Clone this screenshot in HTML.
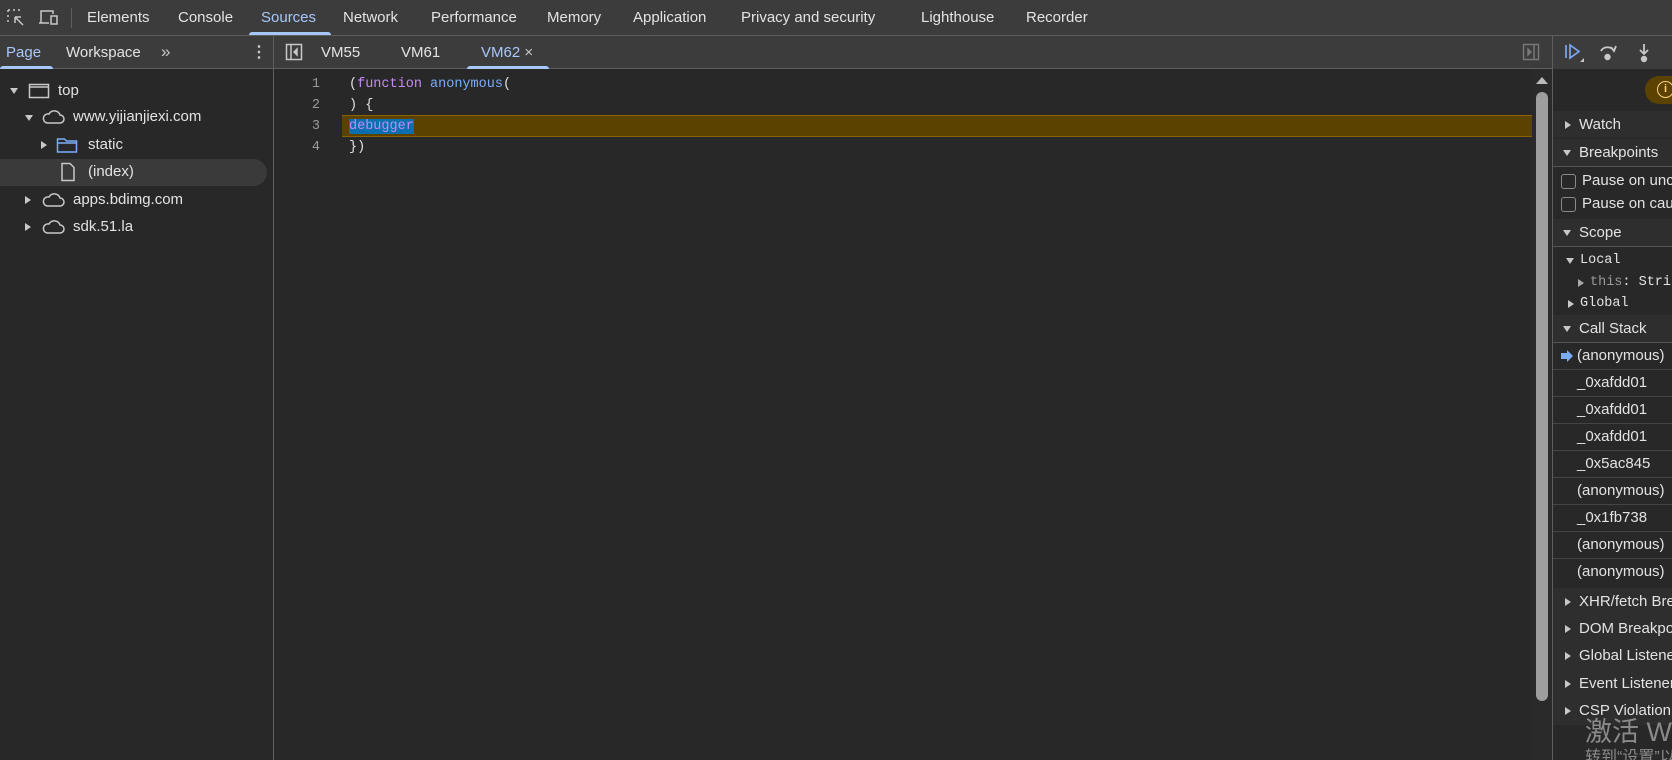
<!DOCTYPE html>
<html><head><meta charset="utf-8"><style>
*{margin:0;padding:0;box-sizing:border-box}
html{overflow:hidden;width:1672px;height:760px}
body{width:1672px;height:760px;overflow:hidden;background:#282828;font-family:"Segoe UI","Liberation Sans","Noto Sans CJK SC",sans-serif;font-size:15px;line-height:22px;color:#e3e3e3;position:relative}
.a{position:absolute;white-space:nowrap}
.bar{background:#3c3c3c;position:absolute;left:0;width:1672px}
.line{position:absolute;background:#5e5e5e}
.mono{font-family:"Liberation Mono","DejaVu Sans Mono",monospace;font-size:13.5px}
.tri{display:block;width:0;height:0;border-left:4px solid transparent;border-right:4px solid transparent;border-top:6px solid #c8c8c8}
.trr{display:block;width:0;height:0;border-top:4px solid transparent;border-bottom:4px solid transparent;border-left:6px solid #c8c8c8}
.hdr{position:absolute;left:1553px;width:119px;height:27px;background:#2e2e2e}
.cs{position:absolute;left:1553px;width:119px;height:27px;border-bottom:1px solid #444}
</style></head><body>
<div class="bar" style="top:0;height:35px"></div>
<div class="line" style="top:35px;left:0;width:1672px;height:1px"></div>
<svg class="a" style="left:6px;top:8px" width="20" height="20" viewBox="0 0 20 20" fill="none" stroke="#c8c8c8" stroke-width="1.5"><path d="M2 2h2M7 2h2M12 2h2M2 2v2M2 7v2M2 12v2" stroke-dasharray="2 2"/><path d="M9 9l8 8M9 9v6M9 9h6"/></svg>
<svg class="a" style="left:38px;top:8px" width="22" height="20" viewBox="0 0 22 20" fill="none" stroke="#c8c8c8" stroke-width="1.5"><path d="M3 15V3h12v3M1 15h10"/><rect x="13" y="8" width="6" height="8"/></svg>
<div class="line" style="left:71px;top:8px;width:1px;height:20px"></div>
<div class="a" style="left:87px;top:7px">Elements</div>
<div class="a" style="left:178px;top:7px">Console</div>
<div class="a" style="left:261px;top:7px;color:#a8c7fa">Sources</div>
<div class="a" style="left:249px;top:32px;width:82px;height:3px;background:#a8c7fa;border-radius:3px 3px 0 0"></div>
<div class="a" style="left:343px;top:7px">Network</div>
<div class="a" style="left:431px;top:7px">Performance</div>
<div class="a" style="left:547px;top:7px">Memory</div>
<div class="a" style="left:633px;top:7px">Application</div>
<div class="a" style="left:741px;top:7px">Privacy and security</div>
<div class="a" style="left:921px;top:7px">Lighthouse</div>
<div class="a" style="left:1026px;top:7px">Recorder</div>
<div class="bar" style="top:36px;height:33px"></div>
<div class="line" style="top:68px;left:0;width:1672px;height:1px"></div>
<div class="a" style="left:6px;top:42px;color:#a8c7fa">Page</div>
<div class="a" style="left:0;top:66px;width:53px;height:3px;background:#a8c7fa;border-radius:3px 3px 0 0"></div>
<div class="a" style="left:66px;top:42px">Workspace</div>
<div class="a" style="left:161px;top:41px;font-size:17px;color:#c8c8c8">»</div>
<div class="a" style="left:251px;top:42px;font-size:16px;font-weight:bold;color:#c8c8c8">⋮</div>
<div class="line" style="left:273px;top:36px;width:1px;height:724px"></div>
<svg class="a" style="left:285px;top:43px" width="18" height="18" viewBox="0 0 18 18" fill="none" stroke="#c8c8c8" stroke-width="1.5"><rect x="1.5" y="1.5" width="15" height="15"/><path d="M6 2v14"/><path d="M12 6l-3 3 3 3z" fill="#c8c8c8"/></svg>
<div class="a" style="left:321px;top:42px">VM55</div>
<div class="a" style="left:401px;top:42px">VM61</div>
<div class="a" style="left:481px;top:42px;color:#a8c7fa">VM62 <span style="color:#c8c8c8">×</span></div>
<div class="a" style="left:467px;top:66px;width:82px;height:3px;background:#a8c7fa;border-radius:3px 3px 0 0"></div>
<svg class="a" style="left:1522px;top:43px" width="18" height="18" viewBox="0 0 18 18" fill="none" stroke="#777" stroke-width="1.5"><rect x="1.5" y="1.5" width="15" height="15"/><path d="M12 2v14"/><path d="M6 6l3 3-3 3z" fill="#777"/></svg>
<div class="line" style="left:1552px;top:36px;width:1px;height:724px"></div>
<div class="a" style="left:0;top:159px;width:267px;height:27px;background:#3a3a3a;border-radius:0 14px 14px 0"></div>
<div class="a" style="left:10px;top:88px"><span class="tri"></span></div>
<svg class="a" style="left:28px;top:82px" width="22" height="18"><rect x="1.5" y="2.5" width="19" height="13" fill="none" stroke="#c8c8c8" stroke-width="1.5"/><path d="M1.5 5h19" stroke="#c8c8c8" stroke-width="1.5"/></svg>
<div class="a" style="left:58px;top:80px">top</div>
<div class="a" style="left:25px;top:115px"><span class="tri"></span></div>
<svg class="a" style="left:41px;top:108px" width="24" height="18" viewBox="0 0 24 18" fill="none" stroke="#c8c8c8" stroke-width="1.5"><path d="M6 15h13a4 4 0 0 0 0-8 6 6 0 0 0-11-1 4.5 4.5 0 0 0-2 9z"/></svg>
<div class="a" style="left:73px;top:106px">www.yijianjiexi.com</div>
<div class="a" style="left:41px;top:141px"><span class="trr"></span></div>
<svg class="a" style="left:56px;top:136px" width="22" height="18" viewBox="0 0 22 18" fill="none" stroke="#7cacf8" stroke-width="1.5"><path d="M1.5 3h7l2 2h10v11h-19z"/><path d="M1.5 7h19"/></svg>
<div class="a" style="left:88px;top:134px">static</div>
<svg class="a" style="left:60px;top:162px" width="16" height="20" viewBox="0 0 16 20" fill="none" stroke="#c8c8c8" stroke-width="1.5"><path d="M2 1.5h8l4 4v13h-12z"/></svg>
<div class="a" style="left:88px;top:161px">(index)</div>
<div class="a" style="left:25px;top:196px"><span class="trr"></span></div>
<svg class="a" style="left:41px;top:191px" width="24" height="18" viewBox="0 0 24 18" fill="none" stroke="#c8c8c8" stroke-width="1.5"><path d="M6 15h13a4 4 0 0 0 0-8 6 6 0 0 0-11-1 4.5 4.5 0 0 0-2 9z"/></svg>
<div class="a" style="left:73px;top:189px">apps.bdimg.com</div>
<div class="a" style="left:25px;top:223px"><span class="trr"></span></div>
<svg class="a" style="left:41px;top:218px" width="24" height="18" viewBox="0 0 24 18" fill="none" stroke="#c8c8c8" stroke-width="1.5"><path d="M6 15h13a4 4 0 0 0 0-8 6 6 0 0 0-11-1 4.5 4.5 0 0 0-2 9z"/></svg>
<div class="a" style="left:73px;top:216px">sdk.51.la</div>
<div class="a" style="left:342px;top:115px;width:1190px;height:22px;background:#5c4200;border-top:1px solid #8a6200;border-bottom:1px solid #8a6200"></div>
<div class="a mono" style="left:306px;top:74px;width:14px;text-align:right;color:#9a9a9a;line-height:21px">1<br>2<br>3<br>4</div>
<div class="a mono" style="left:349px;top:74px;line-height:21px;color:#e3e3e3">(<span style="color:#c58af9">function</span> <span style="color:#7cacf8">anonymous</span>(<br>) {<br><span style="background:#0a6fb0;color:#c58af9">debugger</span><br>})</div>
<div class="a" style="left:1532px;top:69px;width:20px;height:691px;background:#2a2a2a"></div>
<div class="a" style="left:1536px;top:77px;width:0;height:0;border-left:6px solid transparent;border-right:6px solid transparent;border-bottom:7px solid #bbb"></div>
<div class="a" style="left:1536px;top:92px;width:12px;height:609px;background:#9e9e9e;border-radius:6px"></div>
<div class="a" style="left:1553px;top:36px;width:119px;height:33px;background:#3c3c3c"></div>
<svg class="a" style="left:1563px;top:42px" width="22" height="22" viewBox="0 0 22 22" fill="none" stroke="#7cacf8" stroke-width="1.6"><path d="M3 3v13"/><path d="M7 3l9 6.5-9 6.5z"/><path d="M17 20h4v-4z" fill="#c8c8c8" stroke="none"/></svg>
<svg class="a" style="left:1597px;top:42px" width="22" height="22" viewBox="0 0 22 22" fill="none" stroke="#c8c8c8" stroke-width="1.8"><path d="M4 9a7 6 0 0 1 13 0"/><path d="M14 5l3 4 2-5" /><circle cx="10.5" cy="15" r="2.3" fill="#c8c8c8"/></svg>
<svg class="a" style="left:1633px;top:42px" width="22" height="22" viewBox="0 0 22 22" fill="none" stroke="#c8c8c8" stroke-width="1.8"><path d="M11 2v10M7 8l4 4 4-4"/><circle cx="11" cy="17" r="2.3" fill="#c8c8c8"/></svg>
<div class="a" style="left:1645px;top:76px;width:40px;height:28px;background:#5c4200;border-radius:14px"></div>
<div class="a" style="left:1657px;top:81px;width:17px;height:17px;border:1.5px solid #ffd27a;border-radius:50%;color:#ffd27a;font-size:11px;text-align:center;line-height:14px;font-weight:bold">i</div>
<div class="hdr" style="top:111px"></div>
<div class="a" style="left:1565px;top:121px"><span class="trr"></span></div>
<div class="a" style="left:1579px;top:114px">Watch</div>
<div class="hdr" style="top:139px;border-bottom:1px solid #555;height:28px"></div>
<div class="a" style="left:1563px;top:150px"><span class="tri"></span></div>
<div class="a" style="left:1579px;top:142px">Breakpoints</div>
<div class="a" style="left:1561px;top:174px;width:15px;height:15px;border:1.5px solid #8a8a8a;border-radius:3px"></div>
<div class="a" style="left:1582px;top:170px">Pause on uncaught exceptions</div>
<div class="a" style="left:1561px;top:197px;width:15px;height:15px;border:1.5px solid #8a8a8a;border-radius:3px"></div>
<div class="a" style="left:1582px;top:193px">Pause on caught exceptions</div>
<div class="hdr" style="top:219px;border-bottom:1px solid #555;height:28px"></div>
<div class="a" style="left:1563px;top:230px"><span class="tri"></span></div>
<div class="a" style="left:1579px;top:222px">Scope</div>
<div class="a" style="left:1566px;top:258px"><span class="tri"></span></div>
<div class="a mono" style="left:1580px;top:250px">Local</div>
<div class="a" style="left:1578px;top:279px"><span class="trr" style="border-left-color:#aaa"></span></div>
<div class="a mono" style="left:1590px;top:272px"><span style="color:#9a9a9a">this</span>: String</div>
<div class="a" style="left:1568px;top:300px"><span class="trr"></span></div>
<div class="a mono" style="left:1580px;top:293px">Global</div>
<div class="hdr" style="top:315px;border-bottom:1px solid #555;height:28px"></div>
<div class="a" style="left:1563px;top:326px"><span class="tri"></span></div>
<div class="a" style="left:1579px;top:318px">Call Stack</div>
<div class="cs" style="top:343px"></div>
<svg class="a" style="left:1560px;top:349px" width="14" height="14"><path d="M1 4h6V1l6 6-6 6v-3H1z" fill="#7cacf8"/></svg>
<div class="a" style="left:1577px;top:345px">(anonymous)</div>
<div class="cs" style="top:370px"></div><div class="a" style="left:1577px;top:372px">_0xafdd01</div>
<div class="cs" style="top:397px"></div><div class="a" style="left:1577px;top:399px">_0xafdd01</div>
<div class="cs" style="top:424px"></div><div class="a" style="left:1577px;top:426px">_0xafdd01</div>
<div class="cs" style="top:451px"></div><div class="a" style="left:1577px;top:453px">_0x5ac845</div>
<div class="cs" style="top:478px"></div><div class="a" style="left:1577px;top:480px">(anonymous)</div>
<div class="cs" style="top:505px"></div><div class="a" style="left:1577px;top:507px">_0x1fb738</div>
<div class="cs" style="top:532px"></div><div class="a" style="left:1577px;top:534px">(anonymous)</div>
<div class="cs" style="top:559px;border:none"></div><div class="a" style="left:1577px;top:561px">(anonymous)</div>
<div class="hdr" style="top:588px;height:137px"></div>
<div class="a" style="left:1565px;top:598px"><span class="trr"></span></div><div class="a" style="left:1579px;top:591px">XHR/fetch Breakpoints</div>
<div class="a" style="left:1565px;top:625px"><span class="trr"></span></div><div class="a" style="left:1579px;top:618px">DOM Breakpoints</div>
<div class="a" style="left:1565px;top:652px"><span class="trr"></span></div><div class="a" style="left:1579px;top:645px">Global Listeners</div>
<div class="a" style="left:1565px;top:680px"><span class="trr"></span></div><div class="a" style="left:1579px;top:673px">Event Listener Breakpoints</div>
<div class="a" style="left:1565px;top:707px"><span class="trr"></span></div><div class="a" style="left:1579px;top:700px">CSP Violation Breakpoints</div>
<div class="a" style="left:1585px;top:716px;font-size:27px;line-height:32px;color:#8a8a8a;font-family:'Liberation Sans','Noto Sans CJK SC',sans-serif">激活 Windows</div>
<div class="a" style="left:1585px;top:748px;font-size:16px;line-height:20px;color:#8a8a8a;font-family:'Liberation Sans','Noto Sans CJK SC',sans-serif">转到“设置”以激活 Windows。</div>
</body></html>
